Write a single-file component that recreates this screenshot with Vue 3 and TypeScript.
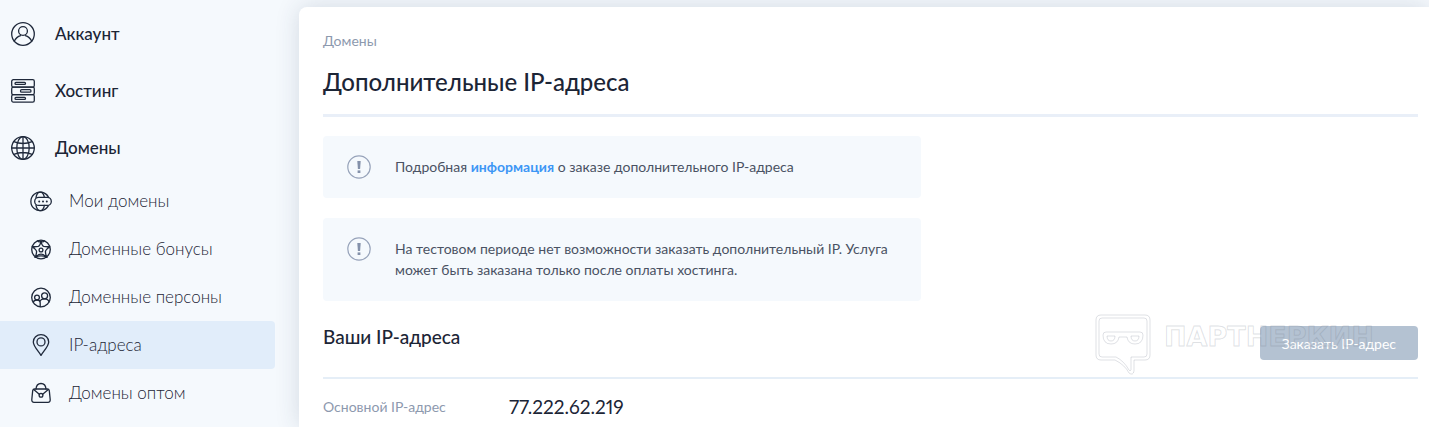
<script setup lang="ts">
interface NavItem {
  id: string
  label: string
}

const sections: NavItem[] = [
  { id: 'account', label: 'Аккаунт' },
  { id: 'hosting', label: 'Хостинг' },
  { id: 'domains', label: 'Домены' },
]

const domainLinks: NavItem[] = [
  { id: 'my', label: 'Мои домены' },
  { id: 'bonus', label: 'Доменные бонусы' },
  { id: 'persons', label: 'Доменные персоны' },
  { id: 'ip', label: 'IP-адреса' },
  { id: 'bulk', label: 'Домены оптом' },
]

const activeLink = 'ip'
</script>

<template>
  <div class="layout">
    <nav class="sidebar" aria-label="Разделы">
      <a v-for="item in sections" :key="item.id" class="section" href="#">
        <svg class="section-icon" viewBox="0 0 24 24" aria-hidden="true">
          <g v-if="item.id === 'account'">
            <circle cx="12" cy="12" r="11.3" />
            <circle cx="12" cy="9" r="4.4" />
            <path d="M3.2 19.2c1.7-3.4 4.3-5 6.4-5.6M20.8 19.2c-1.7-3.4-4.3-5-6.4-5.6" />
          </g>
          <g v-else-if="item.id === 'hosting'">
            <rect x="0.7" y="0.7" width="22.6" height="7.4" rx="1.6" />
            <rect x="0.7" y="8.1" width="22.6" height="7.6" rx="1.6" />
            <rect x="0.7" y="15.7" width="22.6" height="7.4" rx="1.6" />
            <rect x="4" y="3.4" width="10.5" height="2" rx="1" />
            <rect x="9.5" y="10.7" width="10.5" height="2.4" rx="1.2" />
            <rect x="4" y="18.4" width="10.5" height="2" rx="1" />
          </g>
          <g v-else>
            <circle cx="12" cy="12" r="11.3" />
            <ellipse cx="12" cy="12" rx="6.2" ry="11.3" />
            <path d="M12 .7v22.6M.7 12h22.6M2.8 5.6c5.4 2.2 13 2.2 18.4 0M2.8 18.4c5.4-2.2 13-2.2 18.4 0" />
          </g>
        </svg>
        <span>{{ item.label }}</span>
      </a>

      <div class="links">
        <a
          v-for="item in domainLinks"
          :key="item.id"
          class="link"
          :class="{ active: item.id === activeLink }"
          :aria-current="item.id === activeLink ? 'page' : undefined"
          href="#"
        >
          <svg class="link-icon" viewBox="0 0 22 22" aria-hidden="true">
            <g v-if="item.id === 'my'">
              <path d="M18.3 6.900A9.300 9.300 0 1 0 18.300 15.900" />
              <path d="M6 7.400C6.600 4.200 8 2.100 10.200 2.100s3.600 2.100 4.200 5.300M6 15.400c.6 3.200 2 5.300 4.200 5.300s3.600-2.100 4.200-5.300" />
              <rect x="4.700" y="7.400" width="16.600" height="8" rx="4" />
              <path class="dots" d="M9.200 11.400h.01M13 11.400h.01M16.800 11.400h.01" />
            </g>
            <g v-else-if="item.id === 'bonus'">
              <circle cx="11" cy="11.500" r="9.300" />
              <path d="M11 3.400q1 4.500 2.700 5 2.500.5 5.900.3-4 3.100-4.200 4.900 0 2.300 1.500 5.700-3.600-3.100-5.900-3.100t-5.900 3.100q1.500-3.400 1.500-5.700-.2-1.800-4.200-4.900 3.400.2 5.900-.3 1.700-.5 2.700-5z" />
              <circle cx="11" cy="12" r="1.900" />
              <path d="M7.500 2.900q1.500 1.700 3.500.5 2 1.200 3.500-.5M5.100 19.300q5.900-2.700 11.800 0" />
            </g>
            <g v-else-if="item.id === 'persons'">
              <circle cx="11" cy="11.500" r="9.300" />
              <circle cx="14.600" cy="9.800" r="3" />
              <circle cx="7" cy="11.600" r="2.400" />
              <path d="M3.300 16.500c.2-1.700 1.600-2.500 3.700-2.500s3.200 1 3.200 2.700v4M10 15.700c.5-2 2.200-2.900 4.600-2.900 2.300 0 4 1 4.400 3.200" />
            </g>
            <g v-else-if="item.id === 'ip'">
              <path d="M11 21.400C8.800 17.600 3.300 12.200 3.300 8a7.700 7.300 0 0 1 15.400 0c0 4.200-5.500 9.600-7.700 13.400z" />
              <circle cx="11" cy="7.900" r="4" />
            </g>
            <g v-else>
              <path d="M4.600 7h12.800c1.100 0 1.700.6 1.900 1.600l.9 8.900c.1 1.800-.7 2.800-2.200 2.800H4c-1.500 0-2.300-1-2.200-2.800l.9-8.900C2.900 7.600 3.500 7 4.600 7z" />
              <path d="M6 7C6.300 3.200 8.200 1.500 11 1.500S15.700 3.200 16 7M3.700 7.600l5.900 4.900M18.300 7.600l-5.900 4.900" />
              <circle cx="11" cy="13.300" r="1.900" />
            </g>
          </svg>
          <span>{{ item.label }}</span>
        </a>
      </div>
    </nav>

    <main class="content">
      <a class="crumb" href="#">Домены</a>
      <h1 class="title">Дополнительные IP-адреса</h1>

      <div class="notice">
        <svg class="notice-icon" viewBox="0 0 24 24" aria-hidden="true">
          <circle cx="12" cy="12" r="11.200" />
          <path d="M10.300 6h3.400l-.6 8h-2.200z" />
          <rect x="10.600" y="15.400" width="2.800" height="2.600" />
        </svg>
        <p>Подробная <a href="#">информация</a> о заказе дополнительного IP-адреса</p>
      </div>

      <div class="notice">
        <svg class="notice-icon" viewBox="0 0 24 24" aria-hidden="true">
          <circle cx="12" cy="12" r="11.200" />
          <path d="M10.300 6h3.400l-.6 8h-2.200z" />
          <rect x="10.600" y="15.400" width="2.800" height="2.600" />
        </svg>
        <p>На тестовом периоде нет возможности заказать дополнительный IP. Услуга может быть заказана только после оплаты хостинга.</p>
      </div>

      <header class="list-head">
        <h2>Ваши IP-адреса</h2>
        <button type="button" class="order">Заказать IP-адрес</button>
        <svg class="watermark" viewBox="0 0 286 64" aria-hidden="true">
          <path d="M6 1h44q5 0 5 5v35q0 5-5 5H39v11q-1 5-5 2-4-8-14-13H6q-5 0-5-5V6q0-5 5-5z" />
          <path d="M7 4h42q3 0 3 3v33q0 3-3 3H36v13q-1 2-2 0-5-9-13-13H7q-3 0-3-3V7q0-3 3-3z" />
          <path d="M11 18h34q3 0 3 3 0 9-8 9-7 0-8-7h-8q-1 7-8 7-8 0-8-9 0-3 3-3zM12 22h8q0 5-4 5t-4-5zM36 22h8q0 5-4 5t-4-5z" />
          <text x="69" y="32">ПАРТНЕРКИН</text>
        </svg>
      </header>

      <dl class="row">
        <dt>Основной IP-адрес</dt>
        <dd>77.222.62.219</dd>
      </dl>
    </main>
  </div>
</template>

<style>
body {
  margin: 0;
  background: #f5f9fd;
}
</style>

<style scoped>
.layout {
  display: flex;
  min-height: 100vh;
  overflow: hidden;
  box-sizing: border-box;
  padding-top: 5px;
  background: #f5f9fd;
  color: #1c2536;
  font-family: Lato, "Noto Sans", sans-serif;
}

.sidebar {
  flex: 0 0 299px;
}

.section,
.link {
  display: flex;
  align-items: center;
  color: inherit;
  text-decoration: none;
}

.section {
  height: 57px;
  padding-left: 11px;
  gap: 20px;
  font-size: 17px;
  font-weight: 500;
}

.section-icon {
  width: 24px;
  height: 24px;
}

.section-icon,
.link-icon {
  flex: none;
  fill: none;
  stroke: #1f293b;
  stroke-width: 1.3;
  stroke-linecap: round;
  stroke-linejoin: round;
}

.links {
  padding-top: 1px;
}

.link {
  height: 48px;
  margin-right: 24px;
  padding-left: 30px;
  gap: 17px;
  border-radius: 0 4px 4px 0;
  color: #1c2536;
  font-size: 17px;
  font-weight: 300;
}

.link span {
  padding-bottom: 2px;
}

.link.active {
  background: #e1edfa;
}

.link-icon {
  width: 22px;
  height: 22px;
}

.dots {
  stroke-width: 2;
}

.content {
  flex: 1;
  min-width: 0;
  margin-top: 2px;
  padding: 24px 11px 0 24px;
  border-radius: 8px 0 0 0;
  background: #fff;
  box-shadow: 0 0 24px rgba(40, 55, 90, 0.16);
}

.crumb {
  display: block;
  color: #8d99ae;
  font-size: 14px;
  line-height: 20px;
  text-decoration: none;
}

.title {
  margin: 15px 0 19px;
  padding-bottom: 16px;
  border-bottom: 3px solid #e9eff8;
  font-size: 24px;
  font-weight: 500;
  line-height: 32px;
}

.notice {
  display: flex;
  gap: 24px;
  box-sizing: border-box;
  max-width: 598px;
  margin-bottom: 20px;
  padding: 20px 24px 21px;
  border-radius: 4px;
  background: #f5f9fd;
  color: #4a5263;
  font-size: 14px;
  line-height: 21px;
}

.notice-icon {
  flex: none;
  width: 24px;
  height: 24px;
  margin: -1px 0 -2px;
  fill: none;
  stroke: #97a3ba;
  stroke-width: 1.2;
}

.notice-icon path,
.notice-icon rect {
  fill: #8491aa;
  stroke: none;
}

.notice p {
  margin: 0;
}

.notice a {
  color: #3d96f5;
  font-weight: 700;
  text-decoration: none;
}

.list-head {
  position: relative;
  display: flex;
  align-items: flex-start;
  justify-content: space-between;
  padding: 5px 0 17px;
  border-bottom: 2px solid #e5eef7;
}

.list-head h2 {
  margin: 0;
  font-size: 19px;
  font-weight: 500;
  line-height: 22px;
}

.order {
  height: 34px;
  padding: 0 22px;
  border: 0;
  border-radius: 4px;
  background: #b4c2d2;
  color: #fff;
  font: 400 14px Lato, "Noto Sans", sans-serif;
}

.watermark {
  position: absolute;
  top: -7px;
  right: 37px;
  width: 286px;
  height: 64px;
  overflow: visible;
  fill: none;
  stroke: rgba(110, 120, 135, 0.22);
  stroke-width: 1;
  pointer-events: none;
}

.watermark text {
  font: 700 27px "DejaVu Sans", sans-serif;
}

.row {
  display: flex;
  align-items: center;
  margin: 16px 0 0;
  line-height: 24px;
}

.row dt {
  width: 186px;
  color: #8d99ae;
  font-size: 14px;
}

.row dd {
  margin: 0;
  font-size: 19px;
  font-variant-numeric: proportional-nums;
}
</style>
